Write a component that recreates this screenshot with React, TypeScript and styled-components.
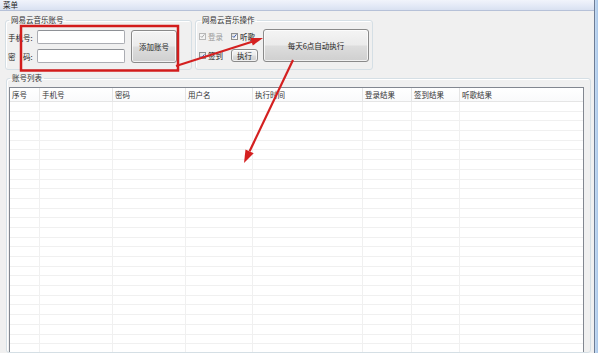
import React from 'react';
import styled, { createGlobalStyle } from 'styled-components';

// ---------- global ----------
const GlobalStyle = createGlobalStyle`
  html, body { margin: 0; padding: 0; background: #f0f0f0; }
  body { font-family: 'Noto Sans CJK SC', 'Noto Sans', sans-serif; font-size: 7.5px; color: #222; }
  * { box-sizing: border-box; }
`;

// ---------- window ----------
const Window = styled.div`
  position: relative; width: 598px; height: 353px; overflow: hidden; display: flex; background: #f0f0f0;
`;

const Main = styled.div`
  flex: 1; display: flex; flex-direction: column; min-width: 0;
`;

const FrameEdge = styled.div`
  width: 4px; border-left: 1px solid #6d7c95; background: linear-gradient(90deg, #c6dcf3, #a9c6e8);
`;

const MenuBar = styled.div`
  height: 11px; display: flex; align-items: center; padding-left: 3px;
  background: linear-gradient(180deg, #f1f4fb 0%, #e3e9f6 60%, #d9e1f1 100%);
  border-bottom: 1px solid #b6c1d8;
`;

const MenuItem = styled.span`
  line-height: 10px; color: #1e1e1e;
`;

const Content = styled.div`
  flex: 1; display: flex; flex-direction: column; padding: 4px 3px 0 5px; min-height: 0;
`;

const TopRow = styled.div`
  display: flex; gap: 3px;
`;

// ---------- group box ----------
const GroupBox = styled.fieldset<{ $width?: number; $pad: string }>`
  margin: 0; padding: ${(p) => p.$pad}; min-width: 0;
  ${(p) => (p.$width ? `width: ${p.$width}px;` : '')}
  border: 1px solid #d5dfe5; border-radius: 3px;
  box-shadow: inset 1px 1px 0 #fff;
`;

const Legend = styled.legend`
  padding: 0 2px; margin-left: 1px; line-height: 10px; color: #333;
`;

// ---------- account form ----------
const AccountForm = styled.div`
  display: grid; grid-template-columns: 24px 88px 47px; grid-template-rows: 14px 14px;
  column-gap: 5px; row-gap: 5px; align-items: center;
`;

const FieldLabel = styled.span`
  white-space: pre; color: #222;
`;

const TextInput = styled.input`
  width: 88px; height: 14px; margin: 0; padding: 0 2px; font: inherit;
  border: 1px solid #abadb3; border-top-color: #8e9196; border-radius: 2px; background: #fff; outline: none;
`;

const Button = styled.button<{ $w: number; $h: number }>`
  width: ${(p) => p.$w}px; height: ${(p) => p.$h}px; margin: 0; padding: 0;
  font: inherit; color: #1e1e1e; cursor: default;
  border: 1px solid #8a8a8a; border-radius: 3px;
  background: linear-gradient(180deg, #f4f4f4 0%, #ebebeb 48%, #dddddd 52%, #cfcfcf 100%);
  box-shadow: inset 0 0 0 1px rgba(255, 255, 255, 0.7);
`;

const SpanRows = styled.div`
  grid-column: 3; grid-row: 1 / span 2; display: flex; padding-left: 1px;
`;

// ---------- operation group ----------
const OpsLayout = styled.div`
  display: flex;
`;

const CheckGrid = styled.div`
  width: 64px; display: grid; grid-template-columns: 32px 32px; grid-template-rows: 14px 13px;
  row-gap: 6px; align-items: center;
`;

const CheckItem = styled.label<{ $disabled?: boolean }>`
  display: flex; align-items: center; gap: 1px; color: ${(p) => (p.$disabled ? '#9a9a9a' : '#111')};
  white-space: nowrap;
`;

const CheckBox = styled.span<{ $disabled?: boolean }>`
  width: 7px; height: 7px; display: flex; align-items: center; justify-content: center;
  border: 1px solid ${(p) => (p.$disabled ? '#b8b8b8' : '#8e8f8f')};
  background: ${(p) => (p.$disabled ? '#f4f4f4' : 'linear-gradient(135deg, #dcdcdc, #ffffff)')};
  margin-right: 1px;
`;

const Check = ({ label, disabled }: { label: string; disabled?: boolean }) => (
  <CheckItem $disabled={disabled}>
    <CheckBox $disabled={disabled}>
      <svg width="6" height="6" viewBox="0 0 6 6">
        <path d="M0.7 3.1 L2.3 4.7 L5.3 1" fill="none" stroke={disabled ? '#a3a3a3' : '#2a4fa8'} strokeWidth="1.1" />
      </svg>
    </CheckBox>
    {label}
  </CheckItem>
);

// ---------- list ----------
const ListGroup = styled(GroupBox)`
  flex: 1; margin-top: 3px; margin-left: 1px; display: flex; flex-direction: column; min-height: 0;
`;

const ListView = styled.div`
  flex: 1; background: #fff; border: 1px solid #828790; border-bottom: none; overflow: hidden;
`;

const COLS = '30px 73px 73px 67px 110px 49px 48px 1fr';

const HeaderRow = styled.div`
  display: grid; grid-template-columns: ${COLS}; height: 14px; border-bottom: 1px solid #e5e5e5;
  background: linear-gradient(180deg, #ffffff, #f9fafb);
`;

const HeaderCell = styled.div`
  display: flex; align-items: center; padding-left: 2px; color: #333; border-right: 1px solid #e5e5e5;
  &:last-child { border-right: none; }
`;

const BodyRow = styled.div`
  display: grid; grid-template-columns: ${COLS}; height: 9.7px; border-bottom: 1px solid #f0f0f0;
`;

const BodyCell = styled.div`
  border-right: 1px solid #f0f0f0;
  &:last-child { border-right: none; }
`;

// ---------- annotation overlay ----------
const Overlay = styled.svg`
  position: absolute; left: 0; top: 0; pointer-events: none;
`;

const HEADERS = ['序号', '手机号', '密码', '用户名', '执行时间', '登录结果', '签到结果', '听歌结果'];
const ROWS = Array.from({ length: 27 }, (_, i) => i);

const App = () => {
  return (
    <>
      <GlobalStyle />
      <Window>
        <Main>
          <MenuBar>
            <MenuItem>菜单</MenuItem>
          </MenuBar>
          <Content>
            <TopRow>
              <GroupBox $width={187} $pad="5px 2px 6px 2px">
                <Legend>网易云音乐账号</Legend>
                <AccountForm>
                  <FieldLabel>手机号:</FieldLabel>
                  <TextInput />
                  <SpanRows>
                    <Button $w={46} $h={33}>添加账号</Button>
                  </SpanRows>
                  <FieldLabel>密　码:</FieldLabel>
                  <TextInput type="text" />
                </AccountForm>
              </GroupBox>
              <GroupBox $width={178} $pad="4px 2px 6px 3px">
                <Legend>网易云音乐操作</Legend>
                <OpsLayout>
                  <CheckGrid>
                    <Check label="登录" disabled />
                    <Check label="听歌" />
                    <Check label="签到" />
                    <Button $w={27} $h={13}>执行</Button>
                  </CheckGrid>
                  <Button $w={106} $h={33}>每天6点自动执行</Button>
                </OpsLayout>
              </GroupBox>
            </TopRow>
            <ListGroup $pad="4px 6px 0 2px">
              <Legend>账号列表</Legend>
              <ListView>
                <HeaderRow>
                  {HEADERS.map((h) => (
                    <HeaderCell key={h}>{h}</HeaderCell>
                  ))}
                </HeaderRow>
                {ROWS.map((r) => (
                  <BodyRow key={r}>
                    {HEADERS.map((h) => (
                      <BodyCell key={h} />
                    ))}
                  </BodyRow>
                ))}
              </ListView>
            </ListGroup>
          </Content>
        </Main>
        <FrameEdge />
        <Overlay width="598" height="353" viewBox="0 0 598 353">
          <rect x="21" y="26" width="157" height="44.5" fill="none" stroke="#d21c1c" strokeWidth="2.5" />
          <line x1="176" y1="66" x2="252" y2="41.7" stroke="#d42020" strokeWidth="2.2" />
          <polygon points="263,38 250.4,37.9 252.8,45.5" fill="#d42020" />
          <line x1="293" y1="60" x2="249.6" y2="151.3" stroke="#d42020" strokeWidth="2.2" />
          <polygon points="244,163 253.7,153.2 245.5,149.4" fill="#d42020" />
        </Overlay>
      </Window>
    </>
  );
};

export default App;
